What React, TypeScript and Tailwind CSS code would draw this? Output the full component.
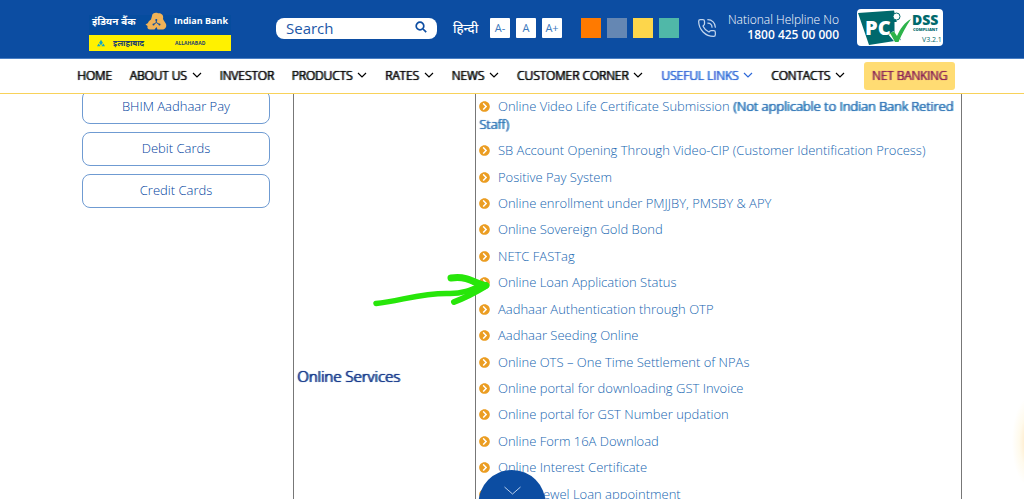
import React from 'react';
import { PhoneCall } from 'lucide-react';
import { FaChevronCircleRight } from 'react-icons/fa';

interface MenuItem {
  name: string;
  hasMenu?: boolean;
  active?: boolean;
}

function classNames(...classes: (string | false | undefined)[]) {
  return classes.filter(Boolean).join(' ');
}

const menu: MenuItem[] = [
  { name: 'HOME' },
  { name: 'ABOUT US', hasMenu: true },
  { name: 'INVESTOR' },
  { name: 'PRODUCTS', hasMenu: true },
  { name: 'RATES', hasMenu: true },
  { name: 'NEWS', hasMenu: true },
  { name: 'CUSTOMER CORNER', hasMenu: true },
  { name: 'USEFUL LINKS', hasMenu: true, active: true },
  { name: 'CONTACTS', hasMenu: true },
];

const themes = [
  { name: 'Orange', color: 'bg-[#ff7a00]' },
  { name: 'Grey blue', color: 'bg-[#6587b3]' },
  { name: 'Yellow', color: 'bg-[#fdd64b]' },
  { name: 'Green', color: 'bg-[#50b8a8]' },
];

const quickLinks = ['BHIM Aadhaar Pay', 'Debit Cards', 'Credit Cards'];

const services = [
  'SB Account Opening Through Video-CIP (Customer Identification Process)',
  'Positive Pay System',
  'Online enrollment under PMJJBY, PMSBY & APY',
  'Online Sovereign Gold Bond',
  'NETC FASTag',
  'Online Loan Application Status',
  'Aadhaar Authentication through OTP',
  'Aadhaar Seeding Online',
  'Online OTS – One Time Settlement of NPAs',
  'Online portal for downloading GST Invoice',
  'Online portal for GST Number updation',
  'Online Form 16A Download',
  'Online Interest Certificate',
  'Online Jewel Loan appointment',
];

const Logo = () => (
  <a href="#" className="block w-[142px] shrink-0 text-white" aria-label="Indian Bank">
    <div className="flex h-5 items-center bg-[#064c9e] px-[3px] pb-2 font-bold">
      <span className="w-[53px] text-[10px] leading-3 whitespace-nowrap">इंडियन बैंक</span>
      <svg viewBox="0 0 22 18" className="h-[18px] w-[22px] shrink-0" aria-hidden="true">
        <path
          d="M7 4C7 1 11 .3 13 1.3C16 .5 19 3 18 6.5C18 8 20 10 21 12C22 15 20 18 16.5 17.5H12.5L11.5 15L9.5 17.5H5C3 17.5 2 16 2.5 14L.5 12.5L3 11C3 9.5 5 8.5 6 7.5Z"
          fill="#f0b257"
        />
        <path d="M11.3 7.5V10.5L8.5 12.5M11.3 10.5L14.5 12.5" stroke="#0b4da2" strokeWidth="1" fill="none" />
        <circle cx="11.3" cy="8" r="1" fill="#0b4da2" />
        <circle cx="8.5" cy="12.5" r="1" fill="#0b4da2" />
        <circle cx="14.5" cy="12.5" r="1" fill="#0b4da2" />
      </svg>
      <span className="flex-1 text-right text-[9px] leading-3 whitespace-nowrap">Indian Bank</span>
    </div>
    <div className="flex h-4 items-center bg-[#fff100] pl-2 font-bold text-[#1d3f6e]">
      <svg viewBox="0 0 10 8" className="mr-2 h-2 w-2 shrink-0" aria-hidden="true">
        <path d="M5 0L7.5 4H2.5ZM2 4.5L4.5 8H0ZM8 4.5L10 8H5.5Z" fill="#12a8c4" />
        <path d="M3 4H7L5 7Z" fill="#12a8c4" />
      </svg>
      <span className="w-[62px] text-[8px] leading-4">इलाहाबाद</span>
      <span className="text-[5px] leading-4">ALLAHABAD</span>
    </div>
  </a>
);

const PciBadge = () => (
  <svg viewBox="0 0 86 37" className="h-[37px] w-[86px] shrink-0" role="img" aria-label="PCI DSS compliant">
    <rect width="86" height="37" rx="4" fill="#fff" />
    <path d="M1 4L37 1.5L44 31L12 36Z" fill="#00696c" />
    <g fontFamily="Open Sans, sans-serif" fontWeight="800">
      <text x="8" y="26" fontSize="20" fill="#fff">PC</text>
      <text x="55" y="16" fontSize="14" fill="#00696c">DSS</text>
      <text x="56" y="22" fontSize="4" fill="#00696c">COMPLIANT</text>
    </g>
    <path d="M37.5 13H42.5V26H37.5Z" fill="#fff" />
    <circle cx="39.5" cy="7.5" r="3.5" fill="#fff" stroke="#00696c" strokeWidth="1" />
    <path d="M34 24L40 31C43 22 47 17 52 12" stroke="#fff" strokeWidth="6" fill="none" />
    <path d="M33 24L37 22.5L40 27C43 20 48 13 54 10C49 17 45 25 41.5 33H38Z" fill="#2db34a" />
    <text x="65" y="33" fontFamily="Open Sans, sans-serif" fontSize="7" fill="#00696c">V3.2.1</text>
  </svg>
);

const TopBar = () => (
  <div className="flex h-[59px] items-start border-b border-[#4a7fc4] bg-[#0c4da2] pr-[81px] pl-[89px] text-white">
    <div className="pt-[15px]">
      <Logo />
    </div>
    <form className="mt-[18px] ml-[45px] flex h-[21px] min-w-0 flex-1 items-center rounded-[8px] bg-white px-2.5">
      <input
        type="text"
        aria-label="Search"
        placeholder="Search"
        className="mb-0.5 w-full min-w-0 bg-transparent text-[15px] leading-5 text-[#0c4da2] outline-none placeholder:text-[#1c57a8]"
      />
      <button type="button" aria-label="Submit search" className="shrink-0 text-[#0c4da2]">
        <svg viewBox="0 0 12 12" className="mb-1 size-3" fill="none" stroke="currentColor" strokeWidth="1.7">
          <circle cx="5" cy="5" r="3.8" />
          <path d="M8 8L11.2 11.2" />
        </svg>
      </button>
    </form>
    <div className="mt-[18px] flex h-5 shrink-0 items-center">
      <a href="#" className="ml-4 w-[37px] text-[13px] leading-5 font-medium">
        हिन्दी
      </a>
      <div className="flex gap-1.5">
        {['A-', 'A', 'A+'].map((size) => (
          <button key={size} type="button" className="size-5 rounded-[1px] bg-white text-[11px] leading-5 text-[#3a78bd]">
            {size}
          </button>
        ))}
      </div>
      <div className="ml-[19px] flex gap-1.5">
        {themes.map((theme) => (
          <button key={theme.name} type="button" aria-label={theme.name} className={classNames('size-5', theme.color)} />
        ))}
      </div>
      <PhoneCall className="ml-[18px] size-5 text-[#c3d6ee]" strokeWidth={1.5} aria-hidden="true" />
    </div>
    <div className="mt-3 w-[122px] shrink-0 text-right text-[12px] leading-[15px]">
      <p className="font-light whitespace-nowrap text-white">National Helpline No</p>
      <p className="font-semibold">1800 425 00 000</p>
    </div>
    <div className="mt-[9px] ml-[18px]">
      <PciBadge />
    </div>
  </div>
);

const NavBar = () => (
  <nav className="flex h-[35px] items-center border-b border-[#f8d25a] bg-white pr-[69px] pl-[77px] text-[12px] font-light [text-shadow:1px_0_0_currentColor,0_0_1px_currentColor]">
    <ul className="flex flex-1 items-center justify-between pr-[19px]">
      {menu.map((item) => (
        <li key={item.name}>
          <a
            href="#"
            className={classNames('flex items-center gap-[5px] whitespace-nowrap', item.active ? 'text-[#2d68d8]' : 'text-black')}
          >
            {item.name}
            {item.hasMenu && (
              <svg viewBox="0 0 10 6" className="mb-0.5 h-1.5 w-2.5" fill="none" stroke="currentColor" strokeWidth="1.2" aria-hidden="true">
                <path d="M1 1L5 5L9 1" />
              </svg>
            )}
          </a>
        </li>
      ))}
    </ul>
    <a href="#" className="flex h-7 w-[91px] shrink-0 items-center justify-center rounded-[3px] bg-[#ffdc73] text-[#8a1c56]">
      NET BANKING
    </a>
  </nav>
);

const Bullet = () => <FaChevronCircleRight className="mr-2 mb-0.5 inline size-[11px] text-[#eb9d22]" aria-hidden="true" />;

export default function App() {
  return (
    <div className="relative flex h-screen flex-col overflow-hidden bg-white font-['Open_Sans','Noto_Sans',sans-serif]">
      <header className="shrink-0">
        <TopBar />
        <NavBar />
      </header>

      <main className="flex min-h-0 flex-1 items-start gap-[23px] overflow-hidden pr-[62px] pl-[82px]">
        <aside className="-mt-1 flex w-[188px] shrink-0 flex-col gap-2">
          {quickLinks.map((link) => (
            <a
              key={link}
              href="#"
              className="flex h-[34px] items-center justify-center rounded-[8px] border border-[#6f9bd2] text-[13px] font-light text-[#003f9e]"
            >
              {link}
            </a>
          ))}
        </aside>

        <table className="h-[564px] flex-1 border-collapse text-[13px] leading-[18px]">
          <tbody>
            <tr>
              <th
                scope="row"
                className="w-[182px] border border-t-0 border-[#777] px-[3px] text-left text-[15px] font-light text-[#14398b] [text-shadow:1px_0_0_currentColor,0_0_1px_currentColor]"
              >
                Online Services
              </th>
              <td className="border border-t-0 border-[#777] pt-[3px] pl-[3px] align-top font-light text-[#1565b0]">
                <a href="#" className="block pb-1">
                  <Bullet />
                  Online Video Life Certificate Submission{' '}
                  <strong className="font-light text-[#2f77b8] [text-shadow:1px_0_0_currentColor,0_0_1px_currentColor]">
                    (Not applicable to Indian Bank Retired Staff)
                  </strong>
                </a>
                <ul className="flex h-[370px] flex-col">
                  {services.map((service) => (
                    <li key={service} className="flex flex-1 items-center whitespace-nowrap">
                      <a href="#">
                        <Bullet />
                        {service}
                      </a>
                    </li>
                  ))}
                </ul>
              </td>
            </tr>
          </tbody>
        </table>
      </main>

      {/* hand-drawn pointer to the loan status link */}
      <svg viewBox="0 0 120 36" className="absolute top-[271px] left-[372px] h-9 w-[120px]" fill="none" aria-hidden="true">
        <path
          d="M4 32.5C28 30 50 22 76 22.5C90 23 99 19 108 15"
          stroke="#27e60a"
          strokeWidth="5.5"
          strokeLinecap="round"
        />
        <path d="M79 7C92 5 99 9 110 14" stroke="#27e60a" strokeWidth="7" strokeLinecap="round" />
        <path d="M82 31C90 28 101 23 114 15" stroke="#27e60a" strokeWidth="6" strokeLinecap="round" />
        <path d="M92 9L115 11Q120 14 116 17L98 25L88 22L105 16Z" fill="#27e60a" />
      </svg>

      <button
        type="button"
        aria-label="Scroll down"
        className="absolute -bottom-[38px] left-1/2 flex size-[67px] -translate-x-1/2 justify-center rounded-full bg-[#0c4da2] pt-4 text-[#b9cfec]"
      >
        <svg viewBox="0 0 18 9" className="h-[9px] w-[18px]" fill="none" stroke="currentColor" strokeWidth="1">
          <path d="M1 1L9 8L17 1" />
        </svg>
      </button>

      <div className="absolute -right-6 bottom-3 h-[90px] w-9 rounded-full bg-[radial-gradient(closest-side,#ffe2b5,#fffaec_60%,transparent)]" />
    </div>
  );
}
